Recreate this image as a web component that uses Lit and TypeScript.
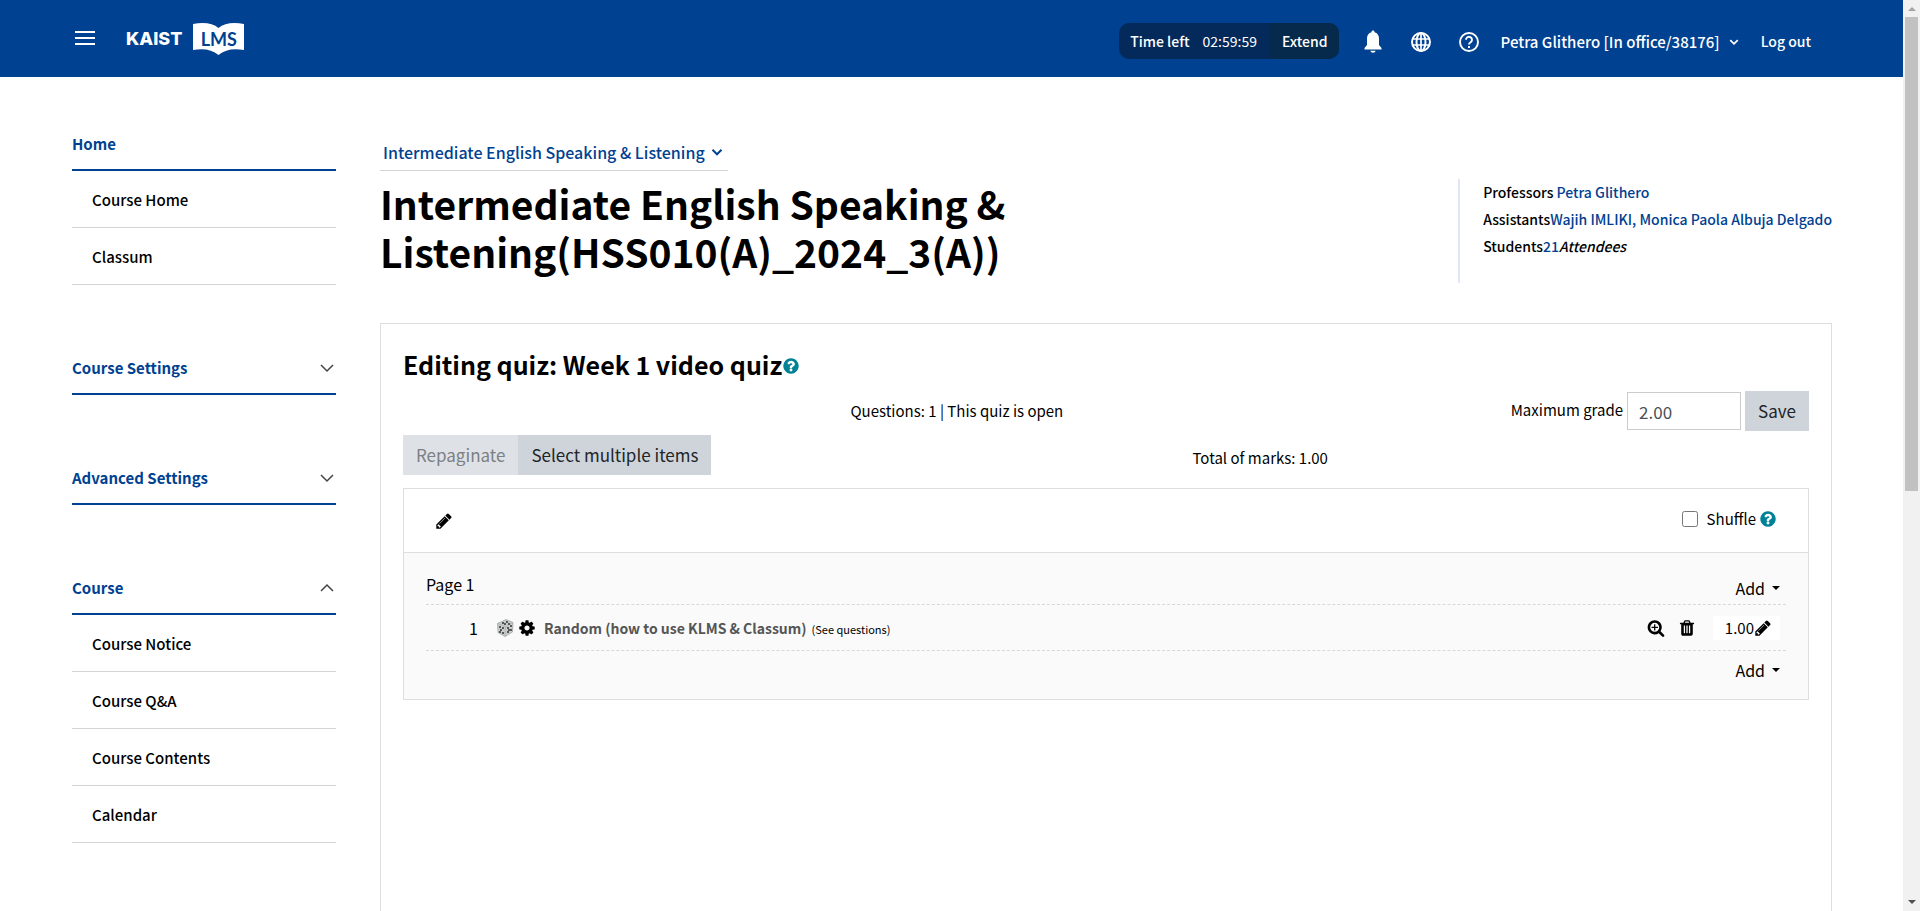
import { LitElement, html, css, svg } from "lit";
import { customElement, property, state } from "lit/decorators.js";

const FA: Record<string, string> = {
  pencil:
    "M491 1536l91-91-235-235-91 91v107h128v128h107zm523-928q0-22-22-22-10 0-17 7l-542 542q-7 7-7 17 0 22 22 22 10 0 17-7l542-542q7-7 7-17zm-54-192l416 416-832 832h-416v-416zm683 96q0 53-37 90l-166 166-416-416 166-165q36-38 90-38 53 0 91 38l235 234q37 39 37 91z",
  cog: "M1152 896q0-106-75-181t-181-75-181 75-75 181 75 181 181 75 181-75 75-181zm512-109v222q0 12-8 23t-20 13l-185 28q-19 54-39 91 35 50 107 138 10 12 10 25t-9 23q-27 37-99 108t-94 71q-12 0-26-9l-138-108q-44 23-91 38-16 136-29 186-7 28-36 28h-222q-14 0-24.5-8.5t-11.5-21.5l-28-184q-49-16-90-37l-141 107q-10 9-25 9-14 0-25-11-126-114-165-168-7-10-7-23 0-12 8-23 15-21 51-66.5t54-70.5q-27-50-41-99l-183-27q-13-2-21-12.5t-8-23.5v-222q0-12 8-23t19-13l186-28q14-46 39-92-40-57-107-138-10-12-10-24 0-10 9-23 26-36 98.5-107.5t94.5-71.5q13 0 26 10l138 107q44-23 91-38 16-136 29-186 7-28 36-28h222q14 0 24.5 8.5t11.5 21.5l28 184q49 16 90 37l142-107q9-9 24-9 13 0 25 10 129 119 165 170 7 8 7 22 0 12-8 23-15 21-51 66.5t-54 70.5q26 50 41 98l183 28q13 2 21 12.5t8 23.5z",
  zoom: "M1088 800v64q0 13-9.5 22.5t-22.5 9.5h-224v224q0 13-9.5 22.5t-22.5 9.5h-64q-13 0-22.5-9.5t-9.5-22.5v-224h-224q-13 0-22.5-9.5t-9.5-22.5v-64q0-13 9.5-22.5t22.5-9.5h224v-224q0-13 9.5-22.5t22.5-9.5h64q13 0 22.5 9.5t9.5 22.5v224h224q13 0 22.5 9.5t9.5 22.5zm128 32q0-185-131.5-316.5t-316.5-131.5-316.5 131.5-131.5 316.5 131.5 316.5 316.5 131.5 316.5-131.5 131.5-316.5zm512 832q0 53-37.5 90.5t-90.5 37.5q-54 0-90-38l-343-342q-179 124-399 124-143 0-273.5-55.5t-225-150-150-225-55.5-273.5 55.5-273.5 150-225 225-150 273.5-55.5 273.5 55.5 225 150 150 225 55.5 273.5q0 220-124 399l343 343q37 37 37 90z",
  trash:
    "M704 1376v-704q0-14-9-23t-23-9h-64q-14 0-23 9t-9 23v704q0 14 9 23t23 9h64q14 0 23-9t9-23zm256 0v-704q0-14-9-23t-23-9h-64q-14 0-23 9t-9 23v704q0 14 9 23t23 9h64q14 0 23-9t9-23zm256 0v-704q0-14-9-23t-23-9h-64q-14 0-23 9t-9 23v704q0 14 9 23t23 9h64q14 0 23-9t9-23zm-544-992h448l-48-117q-7-9-17-11h-317q-10 2-17 11zm928 32v64q0 14-9 23t-23 9h-96v948q0 83-47 143.5t-113 60.5h-832q-66 0-113-58.5t-47-141.5v-952h-96q-14 0-23-9t-9-23v-64q0-14 9-23t23-9h309l70-167q15-37 54-63t79-26h320q40 0 79 26t54 63l70 167h309q14 0 23 9t9 23z",
  help: "M1024 1376v-192q0-14-9-23t-23-9h-192q-14 0-23 9t-9 23v192q0 14 9 23t23 9h192q14 0 23-9t9-23zm256-672q0-88-55.5-163t-138.5-116-170-41q-243 0-371 213-15 24 8 42l132 100q7 6 19 6 16 0 25-12 53-68 86-92 34-24 86-24 48 0 85.5 26t37.5 59q0 38-20 61t-68 45q-63 28-115.5 86.5t-52.5 125.5v36q0 14 9 23t23 9h192q14 0 23-9t9-23q0-19 21.5-49.5t54.5-49.5q32-18 49-28.5t46-35 44.5-48 28-60.5 12.5-81zm384 192q0 209-103 385.5t-279.5 279.5-385.5 103-385.5-103-279.5-279.5-103-385.5 103-385.5 279.5-279.5 385.5-103 385.5 103 279.5 279.5 103 385.5z",
};

const fa = (name: string) =>
  html`<svg class="fa" viewBox="0 0 1792 1792" aria-hidden="true"><path d=${FA[name]} fill="currentColor"></path></svg>`;

const chevron = (up = false) =>
  html`<svg class="chev" viewBox="0 0 16 16" aria-hidden="true">
    <path d=${up ? "M2 11l6-6 6 6" : "M2 5l6 6 6-6"} fill="none" stroke="currentColor"></path>
  </svg>`;

const base = css`
  * { box-sizing: border-box; }
  button, input, select { font: inherit; color: inherit; margin: 0; }
  button { background: none; border: 0; padding: 0; cursor: pointer; }
  a { color: inherit; text-decoration: none; }
  svg { display: block; flex: none; }
  .fa { width: 18px; height: 18px; }
  .chev { width: 16px; height: 16px; stroke-width: 1.5; }
`;

@customElement("site-header")
class SiteHeader extends LitElement {
  static styles = [base, css`
    :host { display: block; background: #004191; color: #fff; }
    .bar { display: flex; align-items: center; height: 77px; padding: 0 92px 0 75px; }
    .logo { display: flex; align-items: center; gap: 11px; margin-left: 31px; }
    .kaist { font: 800 18px/20px Inter, sans-serif; }
    .book { display: grid; place-items: center; }
    .book > * { grid-area: 1 / 1; }
    .lms { font: 700 18px/20px Lato, sans-serif; color: #004191; }
    .tools { display: flex; align-items: center; margin-left: auto; padding-top: 4px; font-size: 14px; line-height: 22px; font-weight: 500; }
    .timer { display: flex; border-radius: 10px; overflow: hidden; background: #042a5c; line-height: 36px; }
    .left { padding: 0 13px 0 11px; }
    .clock { font-weight: 400; }
    .extend { padding: 0 11px 0 12px; margin-left: 13px; background: #052a4c; }
    .icons { display: flex; gap: 24px; margin: 0 20px 0 22px; padding-top: 2px; }
    .user { display: flex; align-items: center; gap: 9px; margin-right: 22px; padding-top: 2px; font-size: 15px; }
    .user .chev { width: 10px; height: 10px; stroke-width: 2.8; }
  `];
  render() {
    return html`<div class="bar">
      <button aria-label="Menu">
        <svg width="20" height="16" viewBox="0 0 20 16"><path d="M0 1h20M0 7h20M0 13h20" stroke="#fff" stroke-width="2"></path></svg>
      </button>
      <a class="logo" href="#">
        <span class="kaist">KAIST</span>
        <span class="book">
          <svg width="51" height="32" viewBox="0 0 51 32"><path d="M0 1Q17-2 25.500 5Q34-2 51 1V27Q35 24 25.500 32Q16 24 0 27Z" fill="#fff"></path></svg>
          <span class="lms">LMS</span>
        </span>
      </a>
      <div class="tools">
        <div class="timer"><span class="left">Time left</span><span class="clock">02:59:59</span><button class="extend">Extend</button></div>
        <div class="icons">
          <button aria-label="Notifications"><svg width="24" height="24" viewBox="0 0 24 24"><path d="M12 .500c-1 0-1.500.7-1.500 1.700C7.600 3 6 5.300 6 8.500V15l-2.500 3V19.500h17V18L18 15V8.500c0-3.200-1.600-5.500-4.500-6.300 0-1-.5-1.700-1.500-1.700zM9.500 20.800h5c0 1.200-1.200 2-2.500 2s-2.500-.8-2.500-2z" fill="#fff"></path></svg></button>
          <button aria-label="Language"><svg width="24" height="24" viewBox="0 0 24 24"><g fill="none" stroke="#fff" stroke-width="2"><circle cx="12" cy="12" r="9"></circle><ellipse cx="12" cy="12" rx="4.500" ry="9"></ellipse><path d="M12 3v18M3.500 9h17M3.500 15h17" stroke-width="1.700"></path></g></svg></button>
          <button aria-label="Help"><svg width="24" height="24" viewBox="0 0 24 24"><g fill="none" stroke="#fff" stroke-width="1.900"><circle cx="12" cy="12" r="9"></circle><path d="M9 9.800a3 3 0 1 1 4.700 2.400c-1.100.8-1.700 1.200-1.700 2.300"></path><path d="M12 16v2"></path></g></svg></button>
        </div>
        <button class="user">Petra Glithero [In office/38176] ${chevron()}</button>
        <a href="#">Log out</a>
      </div>
    </div>`;
  }
}

interface Section { title: string; open?: boolean; items: string[]; fixed?: boolean }

@customElement("side-nav")
class SideNav extends LitElement {
  @state() sections: Section[] = [
    { title: "Home", open: true, fixed: true, items: ["Course Home", "Classum"] },
    { title: "Course Settings", items: [] },
    { title: "Advanced Settings", items: [] },
    { title: "Course", open: true, items: ["Course Notice", "Course Q&A", "Course Contents", "Calendar"] },
  ];
  static styles = [base, css`
    :host { display: flex; flex-direction: column; gap: 60px; font-size: 15px; line-height: 22px; font-weight: 500; }
    .head { display: flex; width: 100%; height: 50px; padding-bottom: 2px; align-items: center; justify-content: space-between; border-bottom: 2px solid #004191; color: #004191; font-weight: 700; text-align: left; }
    .head .chev { color: #444; margin-right: 1px; }
    .item { display: block; padding: 18px 20px 16px; border-bottom: 1px solid #d3d4d6; color: #000; }
  `];
  render() {
    return this.sections.map((s) => html`<nav aria-label=${s.title}>
      ${s.fixed
        ? html`<a class="head" href="#">${s.title}</a>`
        : html`<button class="head" aria-expanded=${s.open ? "true" : "false"}>${s.title}${chevron(s.open)}</button>`}
      ${s.items.map((i) => html`<a class="item" href="#">${i}</a>`)}
    </nav>`);
  }
}

@customElement("course-head")
class CourseHead extends LitElement {
  static styles = [base, css`
    :host { display: block; color: #000; }
    .picker { display: inline-grid; align-items: center; border-bottom: 1px solid #d3d4d6; color: #004191; }
    .picker > * { grid-area: 1 / 1; }
    .picker .chev { width: 12px; height: 12px; justify-self: end; margin-right: 5px; stroke-width: 2.6; pointer-events: none; }
    .select { appearance: none; height: 36px; border: 0; padding: 0 23px 0 3px; background: none; font-size: 16px; font-weight: 500; }
    .row { display: flex; justify-content: space-between; align-items: flex-start; margin-top: 8px; }
    .title { flex: 0 1 680px; margin: 0; font-size: 39px; line-height: 48px; font-weight: 700; }
    .info { border-left: 2px solid #e1e5f5; padding: 0 0 23px 23px; font-size: 14px; line-height: 27px; font-weight: 500; }
    .info a { color: #004191; }
  `];
  render() {
    return html`<div class="picker">
        <select class="select" aria-label="Course"><option>Intermediate English Speaking &amp; Listening</option></select>
        ${chevron()}
      </div>
      <div class="row">
        <h1 class="title">Intermediate English Speaking &amp; Listening(HSS010(A)_2024_3(A))</h1>
        <div class="info">
          <div>Professors <a href="#">Petra Glithero</a></div>
          <div>Assistants<a href="#">Wajih IMLIKI, Monica Paola Albuja Delgado</a></div>
          <div>Students<a href="#">21</a><em>Attendees</em></div>
        </div>
      </div>`;
  }
}

const pips: [number, number][] = [[6, 4], [10, 3], [8, 5], [12, 5], [3, 8], [6, 9], [4, 11], [6, 14], [3, 13], [11, 9], [14, 7], [11, 13], [14, 11], [12, 11]];

@customElement("quiz-editor")
class QuizEditor extends LitElement {
  @property() grade = "2.00";
  static styles = [base, css`
    :host { display: block; border: 1px solid #dedede; padding: 22px; color: #000; font-size: 15px; line-height: 22px; }
    .title { display: flex; align-items: center; margin: 0; padding-bottom: 2px; font-size: 25px; line-height: 36px; font-weight: 700; }
    .title button { margin-top: 4px; }
    .teal { color: #008196; }
    .status { display: flex; margin-top: 7px; }
    .state { flex: 1; text-align: center; padding-top: 9px; }
    .form { display: flex; align-items: center; gap: 4px; }
    .form label { padding-bottom: 2px; }
    .grade { width: 114px; height: 38px; border: 1px solid #ccc; padding: 0 11px; font-size: 17px; color: #495057; background: #fff; }
    .btn { height: 40px; padding: 0 13px; background: #ced4da; color: #212529; font-size: 17px; }
    .btn.off { background: #dee2e6; color: #7c7f83; }
    .actions { display: flex; margin-top: 4px; }
    .total { flex: 1; text-align: center; padding-top: 12px; }
    .box { margin-top: 13px; border: 1px solid #dedede; background: #fafafa; }
    .boxhead { display: flex; justify-content: space-between; align-items: center; height: 64px; padding: 0 31px; background: #fff; border-bottom: 1px solid #dedede; }
    .shuffle { display: flex; align-items: center; padding-bottom: 4px; }
    .check { width: 16px; height: 16px; margin-right: 9px; }
    .shuffle label { margin-right: 3px; }
    .body { padding: 18px 22px 10px; }
    .page, .slot { display: flex; align-items: center; border-bottom: 1px dashed #d6d8da; }
    .page { justify-content: space-between; height: 34px; font-size: 16px; }
    .pageno { padding-bottom: 8px; }
    .slot { height: 46px; padding-right: 6px; }
    .num { width: 52px; text-align: right; font-size: 16px; margin-right: 19px; }
    .die { margin-right: 4px; }
    .name { margin: 0 5px 0 8px; font-size: 14px; font-weight: 700; color: #555; }
    .see { font-size: 11px; flex: 1; padding-top: 2px; }
    .tool { margin-right: 13px; }
    .mark { display: flex; align-items: center; margin-left: 4px; height: 24px; padding: 0 8px 0 12px; background: #fff; }
    .add { display: flex; align-items: center; gap: 7px; padding-right: 6px; font-size: 16px; }
    .caret { border: 4px solid transparent; border-top-color: currentColor; border-bottom: 0; }
    .last { display: flex; justify-content: flex-end; height: 38px; }
  `];
  add() {
    return html`<button class="add">Add<span class="caret"></span></button>`;
  }
  render() {
    return html`
      <h2 class="title">Editing quiz: Week 1 video quiz<button class="teal" aria-label="Help with editing quiz">${fa("help")}</button></h2>
      <div class="status">
        <div class="state">Questions: 1 | This quiz is open</div>
        <form class="form" @submit=${(e: Event) => e.preventDefault()}>
          <label for="grade">Maximum grade</label>
          <input id="grade" class="grade" type="text" .value=${this.grade} />
          <button class="btn">Save</button>
        </form>
      </div>
      <div class="actions">
        <button class="btn off" disabled>Repaginate</button>
        <button class="btn">Select multiple items</button>
        <div class="total">Total of marks: 1.00</div>
      </div>
      <section class="box">
        <div class="boxhead">
          <button aria-label="Edit heading">${fa("pencil")}</button>
          <div class="shuffle">
            <input id="shuffle" class="check" type="checkbox" />
            <label for="shuffle">Shuffle</label>
            <button class="teal" aria-label="Help with shuffle">${fa("help")}</button>
          </div>
        </div>
        <div class="body">
          <div class="page"><span class="pageno">Page 1</span>${this.add()}</div>
          <div class="slot">
            <span class="num">1</span>
            <svg class="die" width="17" height="18" viewBox="0 0 17 18">
              <path d="M9 .500L16 3.500 15.500 13 8 17.500 1 13.500.500 4.500Z" fill="#c9cdcb" stroke="#9a9e9c" stroke-width=".7"></path>
              <path d="M.500 4.500L8.500 7.500 16 3.500M8.500 7.500L8 17.500" fill="none" stroke="#a8acaa" stroke-width=".7"></path>
              ${pips.map(([x, y]) => svg`<circle cx=${x} cy=${y} r=".9" fill="#222"></circle>`)}
            </svg>
            <button aria-label="Configure question">${fa("cog")}</button>
            <a class="name" href="#">Random (how to use KLMS &amp; Classum)</a>
            <a class="see" href="#">(See questions)</a>
            <button class="tool" aria-label="Preview">${fa("zoom")}</button>
            <button class="tool" aria-label="Delete">${fa("trash")}</button>
            <button class="mark">1.00${fa("pencil")}</button>
          </div>
          <div class="last">${this.add()}</div>
        </div>
      </section>`;
  }
}

@customElement("app-root")
class AppRoot extends LitElement {
  static styles = [base, css`
    :host { display: flex; height: 100vh; overflow: hidden; background: #fff; font-family: "Noto Sans CJK KR", "Noto Sans", sans-serif; font-size: 15px; }
    .page { flex: 1; min-width: 0; display: flex; flex-direction: column; }
    .layout { flex: 1; display: flex; gap: 44px; padding: 44px 71px 0 72px; min-height: 0; }
    .side { flex: none; width: 264px; }
    .main { flex: 1; min-width: 0; display: flex; flex-direction: column; padding-top: 13px; }
    .card { flex: 1; margin-top: 40px; border-bottom: 0; }
    .scroll { display: flex; flex-direction: column; align-items: center; justify-content: space-between; width: 17px; background: #f1f1f1; padding: 7px 0; }
    .up, .down { border: 4px solid transparent; }
    .up { border-bottom-color: #a3a3a3; border-top: 0; }
    .down { border-top-color: #505050; border-bottom: 0; }
    .track { flex: 1; width: 13px; margin: 6px 0; }
    .thumb { height: 54%; background: #c1c1c1; }
  `];
  render() {
    return html`
      <div class="page">
        <site-header></site-header>
        <div class="layout">
          <side-nav class="side"></side-nav>
          <main class="main">
            <course-head></course-head>
            <quiz-editor class="card"></quiz-editor>
          </main>
        </div>
      </div>
      <div class="scroll" aria-hidden="true"><span class="up"></span><div class="track"><div class="thumb"></div></div><span class="down"></span></div>`;
  }
}
